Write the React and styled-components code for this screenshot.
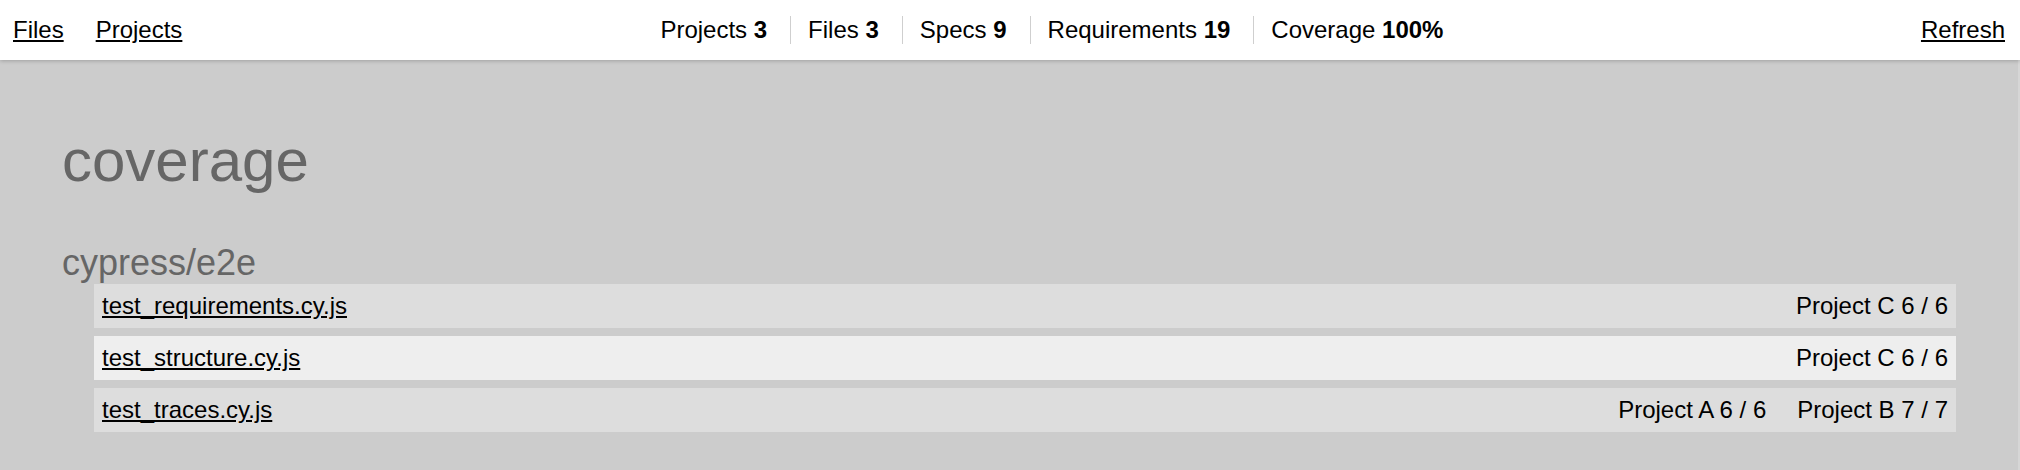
import React from "react";
import styled, { createGlobalStyle } from "styled-components";

const Global = createGlobalStyle`
  html, body { margin: 0; padding: 0; }
  body {
    font-family: "Liberation Sans", Arial, Helvetica, sans-serif;
    font-size: 24px;
    background: #d6d6d6;
    color: #000;
  }
`;

const Page = styled.div`
  min-height: 100vh;
  display: flex;
  flex-direction: column;
`;

const Header = styled.header`
  position: relative;
  z-index: 1;
  height: 60px;
  display: flex;
  align-items: center;
  padding: 0 15px 0 13px;
  background: #fff;
  box-shadow: 0 1px 4px rgba(0, 0, 0, 0.22);
`;

const Nav = styled.nav`
  display: flex;
  gap: 32px;
`;

const Link = styled.a`
  color: #000;
  text-decoration: underline;
  cursor: pointer;
`;

const Stats = styled.div`
  display: flex;
  align-items: center;
  margin-left: 461px;
`;

const Stat = styled.div`
  padding: 0 23px 0 17px;
  border-left: ${(p) => (p.$first ? "none" : "1px solid #cfcfcf")};
`;

const Right = styled.div`
  margin-left: auto;
`;

const Main = styled.main`
  flex: 1;
  background: #cccccc;
  margin-right: 2px;
  padding: 66px 62px 40px;
`;

const Title = styled.h1`
  margin: 0;
  font-size: 60px;
  font-weight: normal;
  color: #666;
`;

const Folder = styled.h2`
  margin: 47px 0 0;
  font-size: 36px;
  font-weight: normal;
  color: #666;
`;

const List = styled.div`
  display: flex;
  flex-direction: column;
  gap: 8px;
  margin-left: 32px;
`;

const Row = styled.div`
  display: flex;
  align-items: center;
  padding: 8px;
  background: ${(p) => (p.$light ? "#eeeeee" : "#dddddd")};
`;

const Coverage = styled.div`
  margin-left: auto;
  display: flex;
  gap: 31px;
`;

const stats = [
  ["Projects", "3"],
  ["Files", "3"],
  ["Specs", "9"],
  ["Requirements", "19"],
  ["Coverage", "100%"],
];

const files = [
  { name: "test_requirements.cy.js", cov: ["Project C 6 / 6"] },
  { name: "test_structure.cy.js", cov: ["Project C 6 / 6"], light: true },
  { name: "test_traces.cy.js", cov: ["Project A 6 / 6", "Project B 7 / 7"] },
];

export default function App() {
  return (
    <>
      <Global />
      <Page>
        <Header>
          <Nav>
            <Link>Files</Link>
            <Link>Projects</Link>
          </Nav>
          <Stats>
            {stats.map(([label, value], i) => (
              <Stat key={label} $first={i === 0}>
                {label} <b>{value}</b>
              </Stat>
            ))}
          </Stats>
          <Right>
            <Link>Refresh</Link>
          </Right>
        </Header>
        <Main>
          <Title>coverage</Title>
          <Folder>cypress/e2e</Folder>
          <List>
            {files.map((f) => (
              <Row key={f.name} $light={f.light}>
                <Link>{f.name}</Link>
                <Coverage>
                  {f.cov.map((c) => (
                    <span key={c}>{c}</span>
                  ))}
                </Coverage>
              </Row>
            ))}
          </List>
        </Main>
      </Page>
    </>
  );
}
